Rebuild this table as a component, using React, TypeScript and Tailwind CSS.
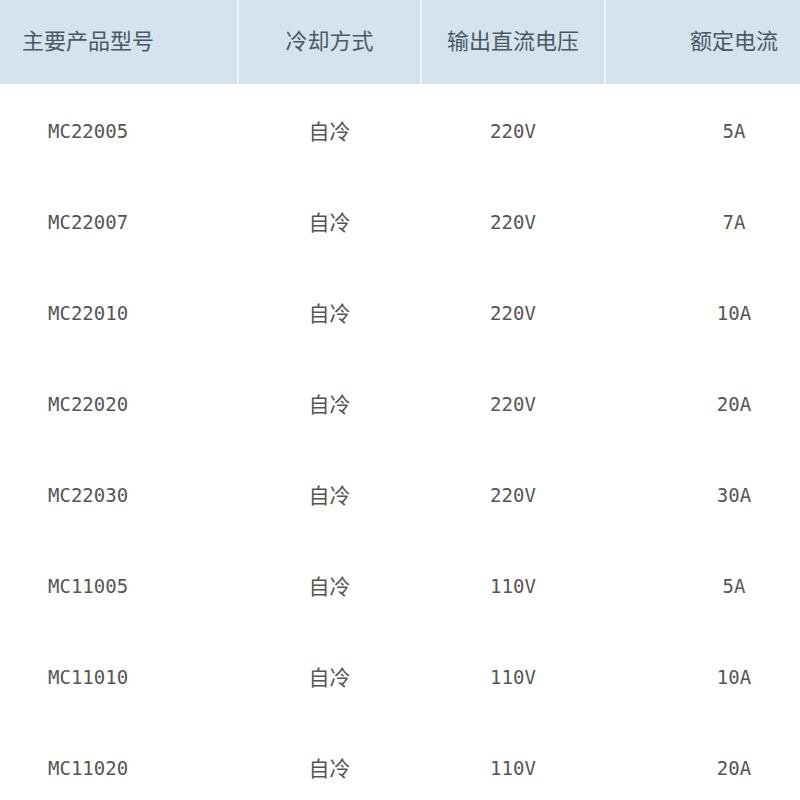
import React from "react";

const rows = [
  ["MC22005", "220V", "5A"],
  ["MC22007", "220V", "7A"],
  ["MC22010", "220V", "10A"],
  ["MC22020", "220V", "20A"],
  ["MC22030", "220V", "30A"],
  ["MC11005", "110V", "5A"],
  ["MC11010", "110V", "10A"],
  ["MC11020", "110V", "20A"],
];

export default function App() {
  return (
    <div className="w-[800px] h-[800px] overflow-hidden bg-white">
      <div className="flex w-[900px] h-[84px] bg-[#d3e4ee] text-[22px] text-[#4a5864] font-['Noto_Sans_CJK_SC',sans-serif]">
        <div className="w-[237px] flex items-center pl-[22px] pb-[5px]">主要产品型号</div>
        <div className="w-[183px] border-l-2 border-[#eef5f9] flex items-center justify-center pb-[5px]">冷却方式</div>
        <div className="w-[184px] border-l-2 border-[#eef5f9] flex items-center justify-center pb-[5px]">输出直流电压</div>
        <div className="w-[258px] border-l-2 border-[#eef5f9] flex items-center justify-center pb-[5px]">额定电流</div>
      </div>
      {rows.map((r) => (
        <div key={r[0]} className="flex w-[900px] h-[91px] pt-[3px] text-[#555]">
          <div className="w-[237px] flex items-center pl-[48px] text-[19px] font-['DejaVu_Sans_Mono',monospace]">{r[0]}</div>
          <div className="w-[183px] pl-[2px] flex items-center justify-center text-[21px] font-['Noto_Sans_CJK_SC',sans-serif]">自冷</div>
          <div className="w-[184px] pl-[2px] flex items-center justify-center text-[19px] font-['DejaVu_Sans_Mono',monospace]">{r[1]}</div>
          <div className="w-[258px] pl-[2px] flex items-center justify-center text-[19px] font-['DejaVu_Sans_Mono',monospace]">{r[2]}</div>
        </div>
      ))}
    </div>
  );
}
